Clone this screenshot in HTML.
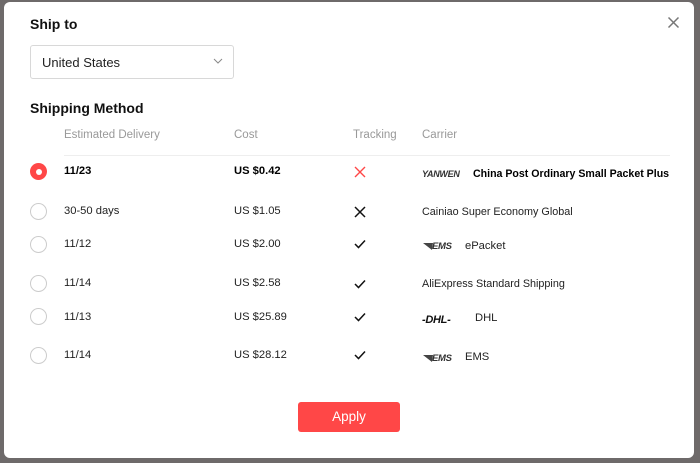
<!DOCTYPE html>
<html><head><style>
body{margin:0;width:700px;height:463px;background:#6e6a6a;font-family:"Liberation Sans",sans-serif;position:relative;overflow:hidden}
.m{position:absolute;left:4px;top:2px;width:690px;height:456px;background:#fff;border-radius:6px}
.a{position:absolute;white-space:nowrap}
.h{font-weight:bold;font-size:14px;color:#111}
.sel{position:absolute;left:30px;top:45px;width:202px;height:32px;border:1px solid #d8d8d8;border-radius:3px}
.th{font-size:11.5px;color:#999;top:129px}
.r{position:absolute;left:30px;width:15px;height:15px;border:1px solid #ccc;border-radius:50%}
.t{font-size:11.2px;color:#222}
.logo{font-style:italic;font-weight:bold;font-size:9.5px;color:#333;letter-spacing:-.3px}
.btn{position:absolute;left:298px;top:402px;width:102px;height:30px;background:#ff4747;border-radius:3px;color:#fff;font-size:13.5px;text-align:center;line-height:30px}
</style></head><body>
<div class="m"></div>
<div class="a h" style="left:30px;top:16px">Ship to</div>
<svg class="a" style="left:667px;top:16px" width="13" height="13"><path d="M1.5 1.5L11.5 11.5M11.5 1.5L1.5 11.5" stroke="#777" stroke-width="1.5"/></svg>
<div class="sel"><span class="a" style="left:11px;top:9px;font-size:13px;color:#222">United States</span>
<svg class="a" style="left:182px;top:12px" width="10" height="7"><path d="M1 1L5 5L9 1" stroke="#888" fill="none"/></svg></div>
<div class="a h" style="left:30px;top:100px">Shipping Method</div>
<div class="a th" style="left:64px">Estimated Delivery</div>
<div class="a th" style="left:234px">Cost</div>
<div class="a th" style="left:353px">Tracking</div>
<div class="a th" style="left:422px">Carrier</div>
<div class="a" style="left:64px;top:155px;width:606px;height:1px;background:#eee"></div>

<div class="r" style="top:163px;border:none;background:#ff4747;width:17px;height:17px"><div style="position:absolute;left:5.5px;top:5.5px;width:6px;height:6px;background:#fff;border-radius:50%"></div></div>
<div class="a t" style="left:64px;top:165px;font-weight:bold;color:#000">11/23</div>
<div class="a t" style="left:234px;top:165px;font-weight:bold;color:#000">US $0.42</div>
<svg class="a" style="left:354px;top:166px" width="12" height="12"><path d="M1 1L11 11M11 1L1 11" stroke="#ff4747" stroke-width="1.4"/></svg>
<div class="a logo" style="left:422px;top:169px;font-size:9px">YANWEN</div>
<div class="a t" style="left:473px;top:168px;font-weight:bold;color:#000;font-size:10.6px">China Post Ordinary Small Packet Plus</div>

<div class="r" style="top:203px"></div>
<div class="a t" style="left:64px;top:205px">30-50 days</div>
<div class="a t" style="left:234px;top:205px">US $1.05</div>
<svg class="a" style="left:354px;top:206px" width="12" height="12"><path d="M1 1L11 11M11 1L1 11" stroke="#111" stroke-width="1.5"/></svg>
<div class="a t" style="left:422px;top:206px;font-size:10.8px">Cainiao Super Economy Global</div>

<div class="r" style="top:236px"></div>
<div class="a t" style="left:64px;top:238px">11/12</div>
<div class="a t" style="left:234px;top:238px">US $2.00</div>
<svg class="a" style="left:354px;top:239px" width="12" height="10"><path d="M1 5L4.5 8.5L11 1.5" stroke="#111" stroke-width="1.5" fill="none"/></svg>
<svg class="a" style="left:423px;top:243px" width="10" height="7"><path d="M0 0H10L9 7Z" fill="#444"/></svg>
<div class="a logo" style="left:432px;top:241px">EMS</div>
<div class="a t" style="left:465px;top:240px">ePacket</div>

<div class="r" style="top:275px"></div>
<div class="a t" style="left:64px;top:277px">11/14</div>
<div class="a t" style="left:234px;top:277px">US $2.58</div>
<svg class="a" style="left:354px;top:279px" width="12" height="10"><path d="M1 5L4.5 8.5L11 1.5" stroke="#111" stroke-width="1.5" fill="none"/></svg>
<div class="a t" style="left:422px;top:278px;font-size:10.8px">AliExpress Standard Shipping</div>

<div class="r" style="top:308px"></div>
<div class="a t" style="left:64px;top:311px">11/13</div>
<div class="a t" style="left:234px;top:311px">US $25.89</div>
<svg class="a" style="left:354px;top:312px" width="12" height="10"><path d="M1 5L4.5 8.5L11 1.5" stroke="#111" stroke-width="1.5" fill="none"/></svg>
<div class="a logo" style="left:422px;top:314px;font-size:11px;color:#111">-DHL-</div>
<div class="a t" style="left:475px;top:312px">DHL</div>

<div class="r" style="top:347px"></div>
<div class="a t" style="left:64px;top:349px">11/14</div>
<div class="a t" style="left:234px;top:349px">US $28.12</div>
<svg class="a" style="left:354px;top:350px" width="12" height="10"><path d="M1 5L4.5 8.5L11 1.5" stroke="#111" stroke-width="1.5" fill="none"/></svg>
<svg class="a" style="left:423px;top:355px" width="10" height="7"><path d="M0 0H10L9 7Z" fill="#444"/></svg>
<div class="a logo" style="left:432px;top:353px">EMS</div>
<div class="a t" style="left:465px;top:351px">EMS</div>

<div class="btn">Apply</div>
</body></html>
